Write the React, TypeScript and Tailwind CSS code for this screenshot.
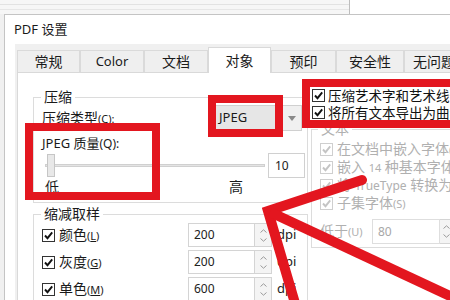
import React from 'react';

const RED = '#e3161f';

const Check: React.FC<{ disabled?: boolean }> = ({ disabled }) => (
  <span
    className={`flex h-[13px] w-[13px] shrink-0 items-center justify-center border bg-white ${
      disabled ? 'border-[#cfcfcf]' : 'border-[#333]'
    }`}
  >
    <svg width="11" height="11" viewBox="0 0 11 11">
      <polyline
        points="2,5.5 4.5,8.2 9.2,2.4"
        fill="none"
        stroke={disabled ? '#c4c4c4' : '#111'}
        strokeWidth="1.9"
      />
    </svg>
  </span>
);

const Spinner: React.FC<{ w: string }> = ({ w }) => (
  <div className={`flex h-full ${w} flex-col items-center justify-center gap-[5px] border border-l-0 border-[#d4d4d4] bg-[#f4f4f4]`}>
    <svg width="7" height="4" viewBox="0 0 7 4"><polyline points="0.5,3.5 3.5,0.8 6.5,3.5" fill="none" stroke="#9a9a9a" strokeWidth="1" /></svg>
    <svg width="7" height="4" viewBox="0 0 7 4"><polyline points="0.5,0.5 3.5,3.2 6.5,0.5" fill="none" stroke="#9a9a9a" strokeWidth="1" /></svg>
  </div>
);

const tabs = ['常规', 'Color', '文档', '对象', '预印', '安全性', '无问题'];
const tabW = ['w-[63px]', 'w-[64px]', 'w-[64px]', 'w-[63px]', 'w-[65px]', 'w-[68px]', 'w-[60px]'];

const DpiRow: React.FC<{ label: string; hot: string; value: string }> = ({ label, hot, value }) => (
  <div className="flex h-[24px] shrink-0 items-center pl-[8px]">
    <div className="flex w-[146px] items-center gap-[4px]">
      <Check />
      <span className="text-[14px] leading-[16px] text-[#1a1a1a]">
        {label}
        <span className="text-[11px]">(<span className="underline">{hot}</span>)</span>
      </span>
    </div>
    <div className="flex h-[24px] w-[67px] items-center border border-[#d4d4d4] pl-[5px] text-[12px] text-[#222]">{value}</div>
    <Spinner w="w-[17px]" />
    <span className="ml-[5px] text-[13px] text-[#222]">dpi</span>
  </div>
);

const TextRow: React.FC<{ children: React.ReactNode }> = ({ children }) => (
  <div className="flex h-[18px] items-center gap-[4px] whitespace-nowrap pl-[8px] text-[14px] leading-[16px] text-[#b0b0b0]">
    <Check disabled />
    <span>{children}</span>
  </div>
);

export default function App() {
  return (
    <div className="relative h-[300px] w-[450px] overflow-hidden bg-[#f0f0f0] font-['Noto_Sans','Noto_Sans_CJK_SC',sans-serif]">
      {/* background window behind the dialog */}
      <div className="flex h-[14px] bg-white">
        <div className="flex w-[350px] flex-col gap-[4px] border-r border-[#bdbdbd] bg-[#f6f6f6] pt-[4px]">
          <div className="h-px bg-[#e2e2e2]" />
          <div className="h-px bg-[#e6e6e6]" />
        </div>
      </div>

      {/* dialog */}
      <div className="ml-[4px] flex h-[286px] flex-col border-l border-t border-[#c4c4c4] bg-white">
        <div className="flex h-[29px] shrink-0 items-center pl-[9px] text-[13px] text-[#1a1a1a]">PDF 设置</div>

        <div className="ml-[10px] flex min-h-0 flex-1 flex-col bg-[#f0f0f0] pl-[2px]">
          <div className="flex h-[28px] shrink-0 items-end">
            {tabs.map((t, i) =>
              i === 3 ? (
                <div key={t} className={`relative z-10 -mb-px flex h-[26px] ${tabW[i]} shrink-0 items-center justify-center border border-b-0 border-[#d9d9d9] bg-white text-[14px] text-[#1a1a1a]`}>
                  {t}
                </div>
              ) : (
                <div key={t} className={`flex h-[22px] ${tabW[i]} shrink-0 items-center justify-center border border-b-0 border-[#dadada] bg-[#efefef] ${t === 'Color' ? 'text-[13px]' : 'text-[14px]'} text-[#1a1a1a] whitespace-nowrap overflow-hidden`}>
                  {t}
                </div>
              )
            )}
          </div>

          <div className="flex min-h-0 flex-1 gap-[3px] overflow-hidden border-l border-t border-[#d9d9d9] bg-white pl-[15px]">
            {/* left column */}
            <div className="flex w-[275px] shrink-0 flex-col pt-[16px]">
              <fieldset className="shrink-0 border border-[#dcdcdc] pb-[7px]">
                <legend className="ml-[7px] px-[3px] text-[14px] leading-[16px] text-[#1a1a1a]">压缩</legend>
                <div className="flex h-[26px] items-center pl-[8px]">
                  <span className="text-[14px] leading-[16px] text-[#1a1a1a]">
                    压缩类型<span className="text-[11px]">(C):</span>
                  </span>
                  <div className="ml-auto mr-[5px] flex h-[26px] w-[90px] border border-[#d0d0d0] bg-[#f0f0f0]">
                    <div className="flex flex-1 items-center bg-[#e6e6e6] pl-[6px] text-[13px] text-[#1a1a1a]">JPEG</div>
                    <div className="flex w-[18px] items-center justify-center">
                      <svg width="8" height="5" viewBox="0 0 8 5"><polygon points="0,0 8,0 4,5" fill="#8a8a8a" /></svg>
                    </div>
                  </div>
                </div>
                <div className="mt-[4px] flex h-[18px] items-center pl-[8px] text-[13px] text-[#1a1a1a]">
                  JPEG 质量<span className="text-[12px]">(Q):</span>
                </div>
                <div className="flex h-[25px] items-center pl-[11px]">
                  <div className="relative flex h-[25px] w-[220px] items-center">
                    <div className="h-[3px] w-full border border-[#d0d0d0] bg-[#e4e4e4]" />
                    <div className="absolute left-[2px] top-[1px] h-[23px] w-[8px] border border-[#c6c6c6] bg-[#e8e8e8]" />
                  </div>
                  <div className="ml-[3px] flex h-[25px] w-[37px] items-center border border-[#d0d0d0] pl-[6px] text-[12px] text-[#222]">10</div>
                </div>
                <div className="mt-[1px] flex h-[16px] items-center pl-[11px] text-[14px] leading-[16px] text-[#1a1a1a]">
                  <span className="w-[184px]">低</span>
                  <span>高</span>
                </div>
              </fieldset>

              <fieldset className="mt-[3px] flex shrink-0 flex-col gap-[3px] border border-[#dcdcdc] pt-[1px] pb-[6px]">
                <legend className="ml-[7px] px-[3px] text-[14px] leading-[16px] text-[#1a1a1a]">缩减取样</legend>
                <DpiRow label="颜色" hot="L" value="200" />
                <DpiRow label="灰度" hot="G" value="200" />
                <DpiRow label="单色" hot="M" value="600" />
              </fieldset>
            </div>

            {/* right column */}
            <div className="flex w-[160px] shrink-0 flex-col pt-[14px]">
              <div className="flex h-[17px] items-center gap-[3px] whitespace-nowrap pl-[1px] text-[13.5px] leading-[16px] text-[#111]">
                <Check />
                <span>压缩艺术字和艺术线条</span>
              </div>
              <div className="flex h-[17px] items-center gap-[3px] whitespace-nowrap pl-[1px] text-[13.5px] leading-[16px] text-[#111]">
                <Check />
                <span>将所有文本导出为曲线</span>
              </div>
              <fieldset className="border border-[#dcdcdc] pt-[3px] pb-[3px]">
                <legend className="ml-[6px] px-[3px] text-[14px] leading-[16px] text-[#b0b0b0]">文本</legend>
                <TextRow>
                  在文档中嵌入字体<span className="text-[11px]">(E)</span>
                </TextRow>
                <TextRow>
                  嵌入 <span className="text-[11px]">14</span> 种基本字体<span className="text-[11px]">(B)</span>
                </TextRow>
                <TextRow>
                  将 <span className="text-[12px]">TrueType</span> 转换为 <span className="text-[12px]">Type 1</span>
                </TextRow>
                <TextRow>
                  子集字体<span className="text-[11px]">(S)</span>
                </TextRow>
                <div className="mt-[7px] flex h-[25px] items-center pl-[8px]">
                  <span className="w-[52px] text-[14px] leading-[16px] text-[#b0b0b0]">
                    低于<span className="text-[11px]">(U)</span>
                  </span>
                  <div className="flex h-[25px] w-[68px] items-center border border-[#dedede] pl-[5px] text-[12px] text-[#a8a8a8]">80</div>
                  <Spinner w="w-[14px]" />
                </div>
              </fieldset>
            </div>
          </div>
        </div>
      </div>

      {/* red annotations */}
      <div className="absolute left-[208px] top-[95px] h-[42px] w-[75px] border-[8px] border-[#e3161f]" />
      <div className="absolute left-[25px] top-[123px] h-[77px] w-[135px] border-[8px] border-[#e3161f]" />
      <div className="absolute left-[302px] top-[79px] h-[49px] w-[160px] border-[8px] border-[#e3161f]" />
      <svg className="absolute left-0 top-0" width="450" height="300" viewBox="0 0 450 300">
        <polyline points="362,180 268,211 297,310" fill="none" stroke={RED} strokeWidth="10" strokeLinecap="round" strokeLinejoin="miter" />
        <line x1="270" y1="212" x2="465" y2="303" stroke={RED} strokeWidth="10" />
      </svg>
    </div>
  );
}
